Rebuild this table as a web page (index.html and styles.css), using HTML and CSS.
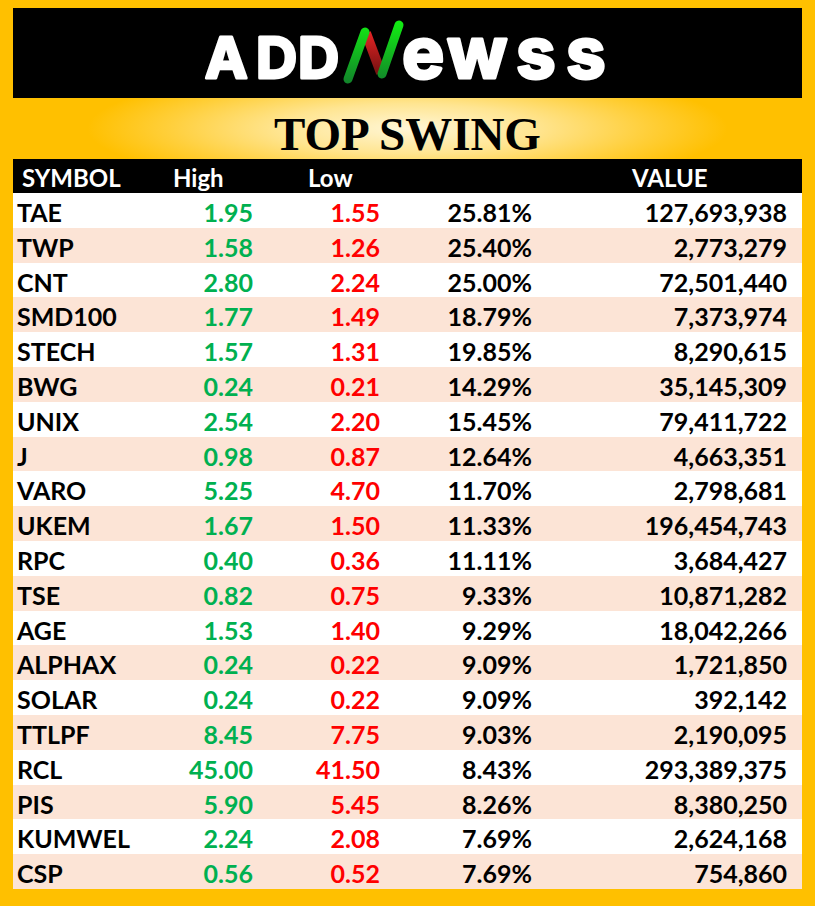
FILE: index.html
```html
<!DOCTYPE html>
<html>
<head>
<meta charset="utf-8">
<link rel="stylesheet" href="styles.css">
</head>
<body>
<div class="page">
  <div class="logo-box">
    <svg class="logo" width="789" height="90" viewBox="13 8 789 90" xmlns="http://www.w3.org/2000/svg">
      <defs>
        <linearGradient id="gg" gradientUnits="userSpaceOnUse" x1="0" y1="20" x2="0" y2="86">
          <stop offset="0" stop-color="#12f012"/>
          <stop offset="1" stop-color="#127e2c"/>
        </linearGradient>
        <linearGradient id="rg" gradientUnits="userSpaceOnUse" x1="0" y1="32" x2="0" y2="76">
          <stop offset="0" stop-color="#e52424"/>
          <stop offset="1" stop-color="#6e1010"/>
        </linearGradient>
      </defs>
      <g class="logo-text">
        <text x="205" y="78" class="cap">A</text>
        <text x="256" y="78" class="cap">D</text>
        <text x="298" y="78" class="cap">D</text>
        <text x="402" y="78" class="low">e</text>
        <text x="447" y="78" class="low">w</text>
        <text x="516" y="78" class="low">s</text>
        <text x="566" y="78" class="low">s</text>
      </g>
      <line x1="366" y1="33" x2="381" y2="73" stroke="url(#rg)" stroke-width="10"/>
      <line x1="348" y1="79" x2="365" y2="32" stroke="url(#gg)" stroke-width="9" stroke-linecap="round"/>
      <line x1="382" y1="74" x2="399" y2="25" stroke="url(#gg)" stroke-width="9" stroke-linecap="round"/>
    </svg>
  </div>
  <div class="title">TOP SWING</div>
  <div class="thead">
    <span>SYMBOL</span><span>High</span><span>Low</span><span>VALUE</span>
  </div>
  <div class="tbody">
    <div class="row"><span class="sym">TAE</span><span class="hi">1.95</span><span class="lo">1.55</span><span class="num">25.81%</span><span class="num">127,693,938</span></div>
    <div class="row"><span class="sym">TWP</span><span class="hi">1.58</span><span class="lo">1.26</span><span class="num">25.40%</span><span class="num">2,773,279</span></div>
    <div class="row"><span class="sym">CNT</span><span class="hi">2.80</span><span class="lo">2.24</span><span class="num">25.00%</span><span class="num">72,501,440</span></div>
    <div class="row"><span class="sym">SMD100</span><span class="hi">1.77</span><span class="lo">1.49</span><span class="num">18.79%</span><span class="num">7,373,974</span></div>
    <div class="row"><span class="sym">STECH</span><span class="hi">1.57</span><span class="lo">1.31</span><span class="num">19.85%</span><span class="num">8,290,615</span></div>
    <div class="row"><span class="sym">BWG</span><span class="hi">0.24</span><span class="lo">0.21</span><span class="num">14.29%</span><span class="num">35,145,309</span></div>
    <div class="row"><span class="sym">UNIX</span><span class="hi">2.54</span><span class="lo">2.20</span><span class="num">15.45%</span><span class="num">79,411,722</span></div>
    <div class="row"><span class="sym">J</span><span class="hi">0.98</span><span class="lo">0.87</span><span class="num">12.64%</span><span class="num">4,663,351</span></div>
    <div class="row"><span class="sym">VARO</span><span class="hi">5.25</span><span class="lo">4.70</span><span class="num">11.70%</span><span class="num">2,798,681</span></div>
    <div class="row"><span class="sym">UKEM</span><span class="hi">1.67</span><span class="lo">1.50</span><span class="num">11.33%</span><span class="num">196,454,743</span></div>
    <div class="row"><span class="sym">RPC</span><span class="hi">0.40</span><span class="lo">0.36</span><span class="num">11.11%</span><span class="num">3,684,427</span></div>
    <div class="row"><span class="sym">TSE</span><span class="hi">0.82</span><span class="lo">0.75</span><span class="num">9.33%</span><span class="num">10,871,282</span></div>
    <div class="row"><span class="sym">AGE</span><span class="hi">1.53</span><span class="lo">1.40</span><span class="num">9.29%</span><span class="num">18,042,266</span></div>
    <div class="row"><span class="sym">ALPHAX</span><span class="hi">0.24</span><span class="lo">0.22</span><span class="num">9.09%</span><span class="num">1,721,850</span></div>
    <div class="row"><span class="sym">SOLAR</span><span class="hi">0.24</span><span class="lo">0.22</span><span class="num">9.09%</span><span class="num">392,142</span></div>
    <div class="row"><span class="sym">TTLPF</span><span class="hi">8.45</span><span class="lo">7.75</span><span class="num">9.03%</span><span class="num">2,190,095</span></div>
    <div class="row"><span class="sym">RCL</span><span class="hi">45.00</span><span class="lo">41.50</span><span class="num">8.43%</span><span class="num">293,389,375</span></div>
    <div class="row"><span class="sym">PIS</span><span class="hi">5.90</span><span class="lo">5.45</span><span class="num">8.26%</span><span class="num">8,380,250</span></div>
    <div class="row"><span class="sym">KUMWEL</span><span class="hi">2.24</span><span class="lo">2.08</span><span class="num">7.69%</span><span class="num">2,624,168</span></div>
    <div class="row"><span class="sym">CSP</span><span class="hi">0.56</span><span class="lo">0.52</span><span class="num">7.69%</span><span class="num">754,860</span></div>
  </div>
</div>
</body>
</html>
```
FILE: styles.css
```css
html, body {
  margin: 0;
  padding: 0;
}
body {
  background: #ffc000;
  font-family: Lato, "Noto Sans", sans-serif;
  width: 815px;
  height: 906px;
  overflow: hidden;
}
.page {
  padding: 8px 13px 0 13px;
  width: 815px;
  box-sizing: border-box;
}
.logo-box {
  height: 90px;
  background: #000;
}
.logo {
  display: block;
}
.logo-text text {
  fill: #fff;
  stroke: #fff;
  stroke-width: 3;
  stroke-linejoin: round;
  font-family: Inter, "Noto Sans", sans-serif;
  font-weight: 700;
}
.logo-text .cap {
  font-size: 57px;
}
.logo-text .low {
  font-size: 71px;
}
.title {
  height: 61px;
  box-sizing: border-box;
  padding-top: 11px;
  line-height: 50px;
  text-align: center;
  font-family: "Liberation Serif", "Times New Roman", serif;
  font-weight: 700;
  font-size: 47px;
  color: #000;
  background: radial-gradient(ellipse 320px 62px at 50% 50%, #fff6d6 0%, #ffe591 40%, #ffcf3a 75%, #ffc000 100%);
}
.thead {
  display: grid;
  grid-template-columns: 151px 135px 324px 1fr;
  padding-left: 9px;
  height: 34px;
  box-sizing: border-box;
  padding-top: 4px;
  line-height: 30px;
  background: #000;
  color: #fff;
  font-weight: 700;
  font-size: 24px;
  white-space: nowrap;
}
.row {
  display: grid;
  grid-template-columns: 145px 91px 127px 152px 255px;
  height: 34.8px;
  box-sizing: border-box;
  padding: 4px 14px 0 4px;
  line-height: 30.8px;
  font-weight: 700;
  font-size: 25px;
  color: #000;
  background: #fff;
  white-space: nowrap;
}
.row:nth-child(even) {
  background: #fce4d6;
}
.sym {
  text-align: left;
}
.hi, .lo, .num {
  text-align: right;
}
.hi {
  color: #00b050;
}
.lo {
  color: #ff0000;
}
```
